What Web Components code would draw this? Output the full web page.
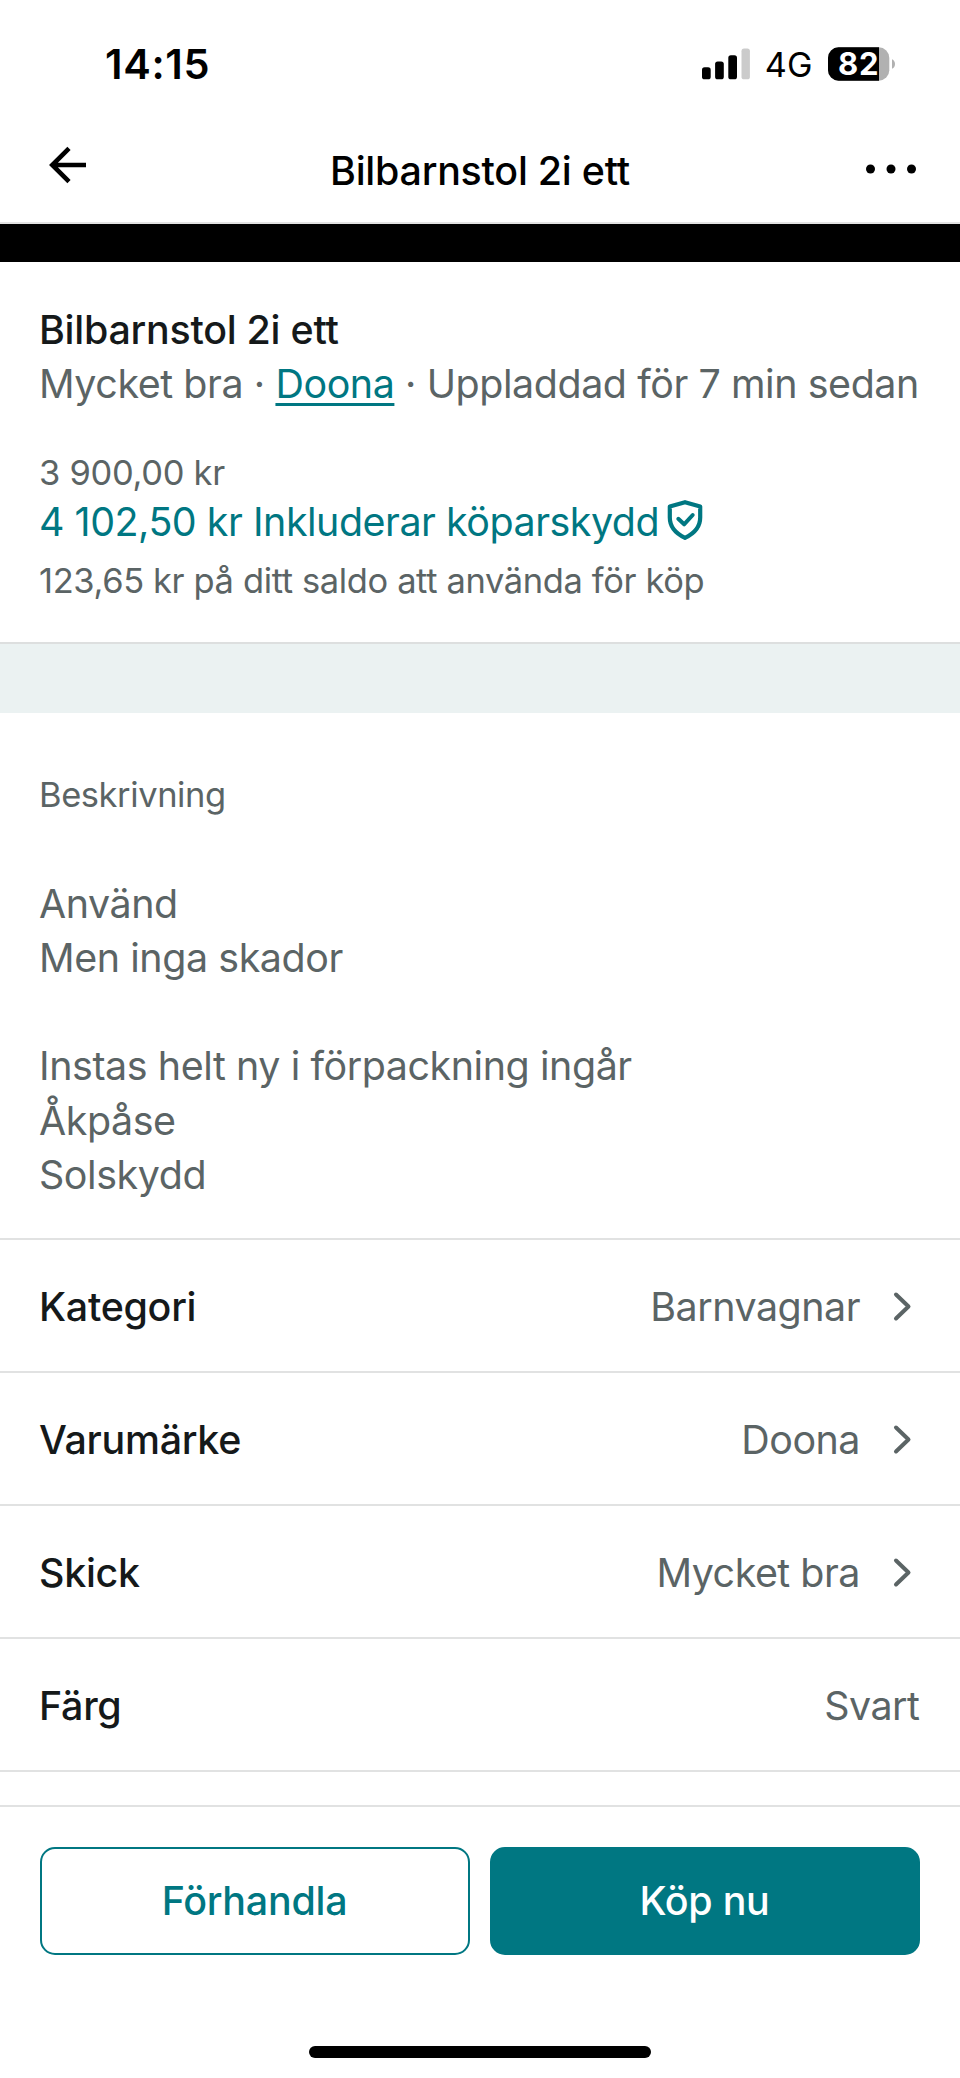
<!DOCTYPE html>
<html lang="sv">
<head>
<meta charset="utf-8">
<title>Bilbarnstol 2i ett</title>
<style>
html, body { margin: 0; background: #fff; }
body {
  font-family: Inter, "Liberation Sans", sans-serif;
  --teal: #007782; --ink: #15191a; --muted: #5b6465; --line: #e1e2e2; --gutter: 39px;
}
</style>
</head>
<body>
<item-screen>
  <status-bar slot="top" time="14:15" network="4G" battery="82"></status-bar>
  <nav-header slot="top">Bilbarnstol 2i ett</nav-header>
  <item-summary>
    <span slot="title">Bilbarnstol 2i ett</span>
    <span slot="condition">Mycket bra</span>
    <span slot="brand">Doona</span>
    <span slot="uploaded">Uppladdad för 7 min sedan</span>
    <span slot="price">3 900,00 kr</span>
    <span slot="total">4 102,50 kr Inkluderar köparskydd</span>
    <span slot="balance">123,65 kr på ditt saldo att använda för köp</span>
  </item-summary>
  <item-description>
    <span slot="heading">Beskrivning</span>
    Använd<br>Men inga skador<br><br>Instas helt ny i förpackning ingår<br>Åkpåse<br>Solskydd
  </item-description>
  <detail-row label="Kategori" link>Barnvagnar</detail-row>
  <detail-row label="Varumärke" link>Doona</detail-row>
  <detail-row label="Skick" link>Mycket bra</detail-row>
  <detail-row label="Färg">Svart</detail-row>
  <action-bar slot="bottom">
    <app-button>Förhandla</app-button>
    <app-button primary>Köp nu</app-button>
  </action-bar>
</item-screen>
<script>
function define(name, html) {
  customElements.define(name, class extends HTMLElement {
    connectedCallback() {
      if (this.shadowRoot) return;
      const root = this.attachShadow({ mode: 'open' });
      root.innerHTML = typeof html === 'function' ? html(this) : html;
    }
  });
}

define('item-screen', `
<style>
  :host { display: flex; flex-direction: column; width: 960px; height: 2078px; overflow: hidden; background: #fff; }
  .photo { height: 38px; background: #000; flex: none; }
  main { flex: 1; min-height: 0; overflow: hidden; }
</style>
<slot name="top"></slot>
<div class="photo"></div>
<main><slot></slot></main>
<slot name="bottom"></slot>`);

define('status-bar', el => `
<style>
  :host { display: flex; justify-content: space-between; align-items: center; flex: none; height: 128px; box-sizing: border-box; padding: 0 64px 0 105px; color: #000; }
  .time { font-size: 41.4px; font-weight: 600; line-height: 50px; letter-spacing: .7px; }
  .right { display: flex; align-items: center; }
  .net { font-size: 34.2px; line-height: 42px; width: 62.7px; padding-left: 13.500px; box-sizing: border-box; margin-top: 2px; }
  .signal, .battery { display: block; flex: none; }
  .cell { display: grid; width: 68px; height: 34px; margin-left: 14px; }
  .cell > * { grid-area: 1 / 1; }
  .level { font-size: 31px; font-weight: 700; line-height: 34px; letter-spacing: .9px; color: #fff; padding-left: 10px; z-index: 1; }
</style>
<span class="time">${el.getAttribute('time')}</span>
<div class="right">
  <svg class="signal" width="49" height="32" viewBox="0 0 49 32">
    <rect x="0" y="19.3" width="8.7" height="12" rx="2.6"/><rect x="13.1" y="13.5" width="8.7" height="17.8" rx="2.6"/>
    <rect x="26.3" y="7.2" width="8.7" height="24.1" rx="2.6"/><rect x="39.5" y=".6" width="8.4" height="30.7" rx="2.6" fill="#cbcbcb"/>
  </svg>
  <span class="net">${el.getAttribute('network')}</span>
  <div class="cell">
    <svg class="battery" width="68" height="34" viewBox="0 0 68 34">
      <rect x="0" y=".3" width="61.3" height="33.4" rx="10.5" fill="#b1b1b1"/>
      <path d="M10.5.3H51v33.4H10.5A10.5 10.5 0 0 1 0 23.2V10.8A10.5 10.5 0 0 1 10.5.3z"/>
      <path d="M64 12.2c2 .9 3 2.600 3 4.800s-1 3.900-3 4.800z" fill="#b1b1b1"/>
    </svg>
    <span class="level">${el.getAttribute('battery')}</span>
  </div>
</div>`);

define('nav-header', `
<style>
  :host { display: grid; grid-template-columns: 48px 1fr 48px; align-items: center; flex: none; height: 96px; box-sizing: border-box; padding: 0 44px; border-bottom: 2px solid #e3e3e3; color: #000; }
  svg { display: block; }
  .back { margin-top: -21px; margin-left: 3px; }
  .more { margin: -12px 0 0 -4px; }
  h1 { margin: -9px 0 0; font-size: 39.4px; line-height: 50px; font-weight: 500; letter-spacing: -.24px; text-align: center; }
</style>
<svg class="back" width="40" height="40" viewBox="0 0 40 40" fill="none" stroke="#000" stroke-width="4.6"><path d="M22 3.400 5.300 20l16.700 16.600M5.300 20h33.700"/></svg>
<h1><slot></slot></h1>
<svg class="more" width="54" height="12" viewBox="0 0 54 12"><circle cx="6.500" cy="6" r="4.500"/><circle cx="27" cy="6" r="4.500"/><circle cx="47.500" cy="6" r="4.500"/></svg>`);

define('item-summary', `
<style>
  :host { display: block; height: 382px; box-sizing: border-box; padding: 40.700px var(--gutter) 0; border-bottom: 2px solid #dddfdf; color: var(--muted); font-size: 39.4px; line-height: 54px; letter-spacing: -.42px; white-space: nowrap; }
  .title { color: var(--ink); font-weight: 500; letter-spacing: -.26px; }
  .brand { color: var(--teal); text-decoration: underline; text-decoration-thickness: 3px; text-underline-offset: 5px; text-decoration-skip-ink: none; }
  .small { font-size: 34.460px; line-height: 44px; letter-spacing: -.36px; }
  .price { margin-top: 40.200px; letter-spacing: -.28px; }
  .total { display: flex; align-items: center; color: var(--teal); letter-spacing: -.47px; }
  .total svg { margin: -3px 0 0 6.500px; }
  .balance { margin-top: 10px; }
</style>
<div class="title"><slot name="title"></slot></div>
<div><slot name="condition"></slot> · <span class="brand"><slot name="brand"></slot></span> · <slot name="uploaded"></slot></div>
<div class="small price"><slot name="price"></slot></div>
<div class="total"><slot name="total"></slot>
  <svg width="38" height="42" viewBox="0 0 38 42" fill="none" stroke="currentColor" stroke-width="4.200" stroke-linejoin="round">
    <path d="M19 3.200 34.200 7.600V18.500C34.200 27.500 28 34.600 19 38.800 10 34.600 3.800 27.500 3.800 18.500V7.600z"/>
    <path d="M12.300 19.800l5.800 5.500L26.700 16" stroke-width="4" stroke-linecap="round"/>
  </svg>
</div>
<div class="small balance"><slot name="balance"></slot></div>`);

define('item-description', `
<style>
  :host { display: block; height: 596px; box-sizing: border-box; border-bottom: 2px solid var(--line); color: var(--muted); }
  .band { height: 68.700px; background: #ebf2f2; }
  .heading { padding: 60.800px var(--gutter) 0; font-size: 34.460px; line-height: 44px; letter-spacing: -.4px; }
  .body { padding: 59.500px var(--gutter) 0; font-size: 39.4px; line-height: 54.150px; letter-spacing: -.42px; }
</style>
<div class="band"></div>
<div class="heading"><slot name="heading"></slot></div>
<div class="body"><slot></slot></div>`);

define('detail-row', el => `
<style>
  :host { display: flex; align-items: center; height: 133.050px; box-sizing: border-box; padding: 3px 40.500px 0 var(--gutter); border-bottom: 2px solid var(--line); font-size: 39.4px; line-height: 50px; color: var(--muted); letter-spacing: -.48px; }
  .label { flex: 1; color: var(--ink); font-weight: 500; letter-spacing: -.28px; }
  svg { display: block; margin: 0 7px 0 28.500px; }
</style>
<span class="label">${el.getAttribute('label')}</span>
<span><slot></slot></span>
${el.hasAttribute('link') ? '<svg width="24" height="34" viewBox="0 0 24 34" fill="none" stroke="currentColor" stroke-width="4" stroke-linecap="round" stroke-linejoin="round"><path d="M7 4.500l12.500 12L7 28.500"/></svg>' : ''}`);

define('action-bar', `
<style>
  :host { display: flex; flex-direction: column; flex: none; height: 273px; box-sizing: border-box; border-top: 2px solid var(--line); background: #fff; }
  .buttons { display: grid; grid-template-columns: 1fr 1fr; gap: 20px; padding: 39.500px 40px 0; }
  .home { width: 342px; height: 12px; border-radius: 6px; background: #000; margin: auto auto 20px; }
</style>
<div class="buttons"><slot></slot></div>
<div class="home"></div>`);

define('app-button', `
<style>
  :host { display: flex; align-items: center; justify-content: center; height: 108px; box-sizing: border-box; border: 2px solid var(--teal); border-radius: 15px; padding: 1px 1px 0 0; color: var(--teal); font-size: 39.4px; font-weight: 500; line-height: 50px; letter-spacing: -.24px; }
  :host([primary]) { background: var(--teal); color: #fff; }
</style>
<slot></slot>`);
</script>
</body>
</html>
